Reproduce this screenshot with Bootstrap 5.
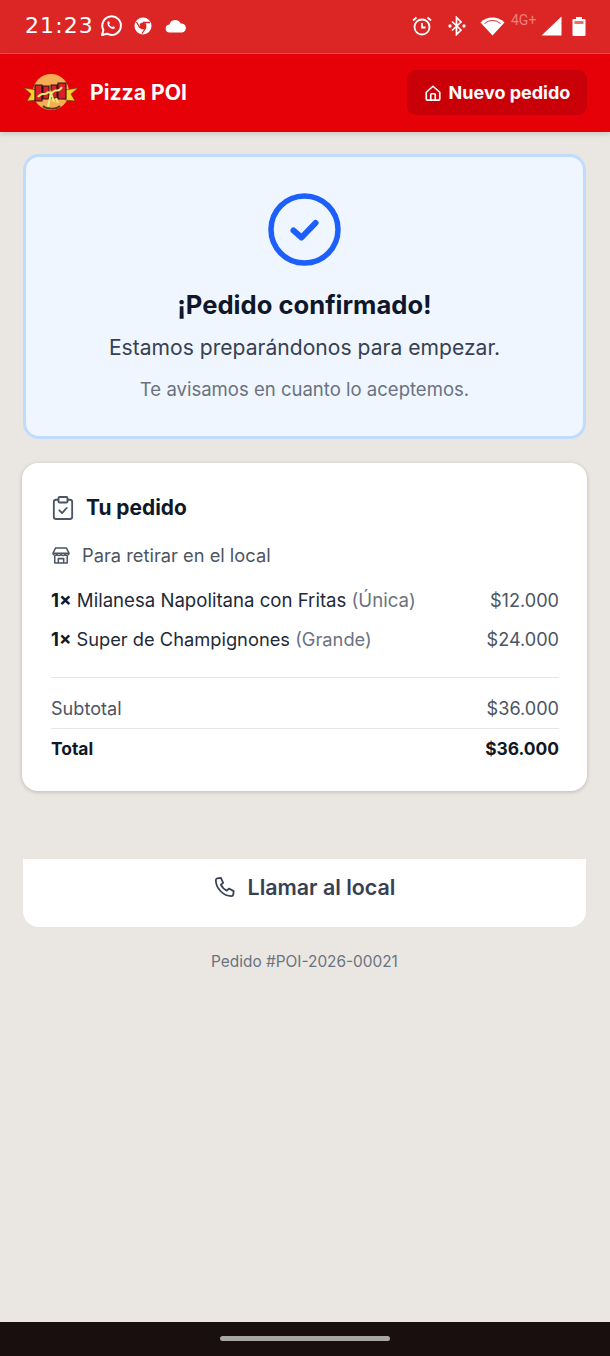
<!DOCTYPE html>
<html lang="es">
<head>
    <meta charset="UTF-8">
    <meta name="viewport" content="width=device-width, initial-scale=1.0">
    <link href="https://cdn.jsdelivr.net/npm/bootstrap@5.3.3/dist/css/bootstrap.min.css" rel="stylesheet">
    <title>Pizza POI</title>
    <style>
        body { background: #eae7e2; font-family: Inter, "Liberation Sans", sans-serif; color: #111827; height: 1356px; overflow: hidden; }
        .page-wrap { height: 1356px; }
        .os-bar { height: 54px; background: #dc2626; border-bottom: 1px solid #e8524f; padding: 0 24px 2px 25px; color: #fff; }
        .os-time { font-family: "DejaVu Sans", sans-serif; font-size: 22px; letter-spacing: 1.1px; width: 74px; }
        .os-net { font-family: Roboto, sans-serif; font-size: 14px; color: #ee7f7c; margin: -10px 2px 0 6px; width: 28px; }
        .gap-wa { margin-left: 11px; }
        .gap-cloud { margin-left: 13px; }
        .gap-bt { margin-left: 15px; }
        .gap-wifi { margin-left: 14px; }
        .gap-batt { margin-left: 10px; }
        .app-head { height: 78px; background: #e60008; padding: 0 23px 0 23px; box-shadow: 0 2px 5px rgba(0,0,0,.15); position: relative; }
        .brand-name { font-size: 21.200px; font-weight: 700; color: #fff; margin-left: 11px; }
        .btn-nuevo { background: #c90007; color: #fff; font-weight: 700; font-size: 18px; height: 45px; width: 180px; margin-top: -1px; border-radius: 9px; padding: 0; border: 0; gap: 7px; }
        .btn-nuevo:hover { background: #c90007; color: #fff; }
        .main-area { padding: 22px 24px 0 23px; }
        .ok-card { height: 285px; background: #eff6ff; border: 3px solid #bfdbfe; border-radius: 16px; padding-top: 36px; }
        .ok-title { font-size: 25.600px; font-weight: 700; color: #0f172a; margin: 21px 0 0; line-height: 36px; }
        .ok-sub { font-size: 21.100px; color: #374151; line-height: 30px; margin: 10px 0 0; }
        .ok-note { font-size: 18.550px; color: #6b7280; line-height: 26px; margin: 13px 0 0; }
        .order-card { margin: 24px -1px 0; height: 328px; background: #fff; border-radius: 16px; box-shadow: 0 1px 4px rgba(0,0,0,.2); padding: 30px 28px 0 29px; }
        .order-title { font-weight: 700; font-size: 20.900px; color: #111827; line-height: 30px; }
        .clip-icon { margin-left: 1px; margin-right: 12px; }
        .pickup-row { font-size: 18.300px; color: #4b5563; margin-top: 19px; line-height: 26px; }
        .store-icon { margin-left: 1px; margin-right: 12px; }
        .item-row { font-size: 18.600px; line-height: 26px; color: #1f2937; margin-top: 19px; }
        .item-row.is-second { font-size: 18.300px; margin-top: 13px; }
        .item-row b { color: #111827; }
        .item-opt { color: #6b7280; }
        .item-price { color: #4b5563; font-size: 18.100px; }
        .total-row { font-size: 18.100px; line-height: 26px; color: #4b5563; }
        .total-row.is-strong { color: #111827; font-weight: 700; font-size: 17.400px; border-top: 1px solid #e5e7eb; padding-top: 7px; margin-top: 7px; }
        .sep-line { border-top: 1px solid #e5e7eb; margin: 25px 0 17px; }
        .call-btn { margin-top: 68px; height: 68px; padding-bottom: 12px; background: #fff; border-radius: 0 0 16px 16px; color: #374151; font-weight: 600; font-size: 21.400px; gap: 12px; }
        .order-num { font-size: 15.400px; color: #6b7280; margin-top: 23px; line-height: 24px; }
        .nav-strip { height: 34px; background: #1a0f0f; }
        .home-pill { width: 170px; height: 5px; background: #a9a6a6; border-radius: 3px; margin-top: 14px; }
    </style>
</head>
<body>
<div class="page-wrap d-flex flex-column">
    <div class="os-bar d-flex align-items-center">
        <span class="os-time">21:23</span>
        <svg width="24" height="24" viewBox="0 0 24 24" fill="none" stroke="#fff" stroke-width="2"><path d="M3 21l1.400-5A9.300 9.300 0 1 1 8 19.700z" stroke-linejoin="round"/><path d="M8.500 8c.6-1.200 1.500-1 1.800-.3l.6 1.500-.8 1c.6 1.300 1.500 2.200 3 2.900l1-.9 1.600.8c.5 1-.3 2-1.500 2-3.500-.2-6.300-3.600-5.700-7z" fill="#fff" stroke="none"/></svg>
        <svg width="18" height="18" viewBox="0 0 18 18" class="gap-wa"><circle cx="9" cy="9" r="8.500" fill="#fff"/><circle cx="9" cy="9" r="3.400" fill="#dc2626"/><path d="M9 5.500h7M6 11l-3.500-6M11.800 11 8 16.500" stroke="#dc2626" stroke-width="1.300"/></svg>
        <svg width="22" height="14" viewBox="0 0 22 14" class="gap-cloud"><path d="M5 13.500a4 4 0 0 1-.6-8A6 6 0 0 1 15.700 4.500 4.500 4.500 0 0 1 17 13.500z" fill="#fff"/></svg>
        <div class="ms-auto d-flex align-items-center">
            <svg width="22" height="22" viewBox="0 0 22 22" fill="none" stroke="#fff" stroke-width="1.800"><circle cx="11" cy="12" r="7.500"/><path d="M11 8v4.500h3.500M2 5.500 5.500 2.500M20 5.500l-3.500-3"/></svg>
            <svg width="18" height="20" viewBox="0 0 18 20" class="gap-bt" fill="none" stroke="#fff" stroke-width="1.700"><path d="M4 5.500 13 14l-4.500 4.500v-17L13 6l-9 8.500"/><circle cx="2" cy="10" r=".8" fill="#fff"/><circle cx="16" cy="10" r=".8" fill="#fff"/></svg>
            <svg width="25" height="20" viewBox="0 0 25 20" class="gap-wifi"><path d="M.5 6.500a17 17 0 0 1 24 0L12.500 19.500z" fill="#fff"/><path d="M4.500 7.500a12 12 0 0 1 16 0" fill="none" stroke="#dc2626" stroke-width="1"/></svg>
            <span class="os-net">4G+</span>
            <svg width="21" height="20" viewBox="0 0 21 20"><path d="M.5 19.500 20.500.5v19z" fill="#fff"/></svg>
            <svg width="14" height="20" viewBox="0 0 14 20" class="gap-batt"><path d="M4 1h6v2h2.500a1 1 0 0 1 1 1v15a1 1 0 0 1-1 1H1.500a1 1 0 0 1-1-1V4a1 1 0 0 1 1-1H4z" fill="#fff"/><rect x="2.500" y="5" width="9" height="3" fill="#e8716e"/></svg>
        </div>
    </div>

    <header class="app-head d-flex align-items-center justify-content-between">
        <div class="d-flex align-items-center">
            <svg width="56" height="40" viewBox="0 0 56 40">
                <circle cx="28" cy="19" r="18" fill="#f6ad55"/>
                <path d="M1 15 14 17 14 27 4 28 8 21z" fill="#f7d02c" stroke="#6b3a10" stroke-width=".6"/>
                <path d="M55 15 42 17 42 27 52 28 48 21z" fill="#f7d02c" stroke="#6b3a10" stroke-width=".6"/>
                <path d="M12 12h7v16h-7zM20 13h6v13h-6zM28 12h6v13h-6zM35 10h8v16h-8z" fill="#d91f2a" stroke="#2a1510" stroke-width="1.100"/>
                <path d="M15 24c4-6 6-1 9-4s3 3 6-1 5 2 9-5M25 34l3-14 3 9M33 25l2 5" fill="none" stroke="#e7ec73" stroke-width="2"/>
                <path d="M20 33c3 3 13 4 17 0" fill="none" stroke="#5b3a1e" stroke-width="2"/>
            </svg>
            <span class="brand-name">Pizza POI</span>
        </div>
        <a href="#" class="btn btn-nuevo d-flex align-items-center justify-content-center">
            <svg width="18" height="18" viewBox="0 0 24 24" fill="none" stroke="#fff" stroke-width="2.200" stroke-linejoin="round"><path d="M3 11 12 3l9 8v9a1.500 1.500 0 0 1-1.500 1.500h-15A1.500 1.500 0 0 1 3 20z"/><path d="M9 21.500V14a1 1 0 0 1 1-1h4a1 1 0 0 1 1 1v7.500"/></svg>
            Nuevo pedido
        </a>
    </header>

    <main class="main-area">
        <section class="ok-card text-center">
            <svg width="73" height="73" viewBox="0 0 73 73" fill="none" stroke="#1d5ffb" class="d-block mx-auto"><circle cx="36.500" cy="36.500" r="33.500" stroke-width="5.500"/><path d="M25.500 37.500 33.500 44.500 47.500 30" stroke-width="6" stroke-linecap="round" stroke-linejoin="round"/></svg>
            <h1 class="ok-title">¡Pedido confirmado!</h1>
            <p class="ok-sub">Estamos preparándonos para empezar.</p>
            <p class="ok-note">Te avisamos en cuanto lo aceptemos.</p>
        </section>

        <section class="order-card">
            <div class="order-title d-flex align-items-center">
                <svg width="22" height="24" viewBox="0 0 24 26" fill="none" stroke="#4b5563" stroke-width="2" stroke-linecap="round" stroke-linejoin="round" class="clip-icon"><path d="M7 4H4.500A2.500 2.500 0 0 0 2 6.500v16A2.500 2.500 0 0 0 4.500 25h15a2.500 2.500 0 0 0 2.500-2.500v-16A2.500 2.500 0 0 0 19.500 4H17"/><rect x="7" y="1" width="10" height="6" rx="1.500"/><path d="M8 15.500l3 3 5-5.500"/></svg>
                <span>Tu pedido</span>
            </div>
            <div class="pickup-row d-flex align-items-center">
                <svg width="18" height="17" viewBox="0 0 20 19" fill="none" stroke="#4b5563" stroke-width="1.700" stroke-linejoin="round" class="store-icon"><path d="M4 1h12l3 6a2.700 2.700 0 0 1-4.500 1.500 3 3 0 0 1-4.500 0 3 3 0 0 1-4.500 0A2.700 2.700 0 0 1 1 7z"/><path d="M3 10v8h14v-8M7 18v-5h6v5M1 7h18"/></svg>
                <span>Para retirar en el local</span>
            </div>
            <div class="item-row d-flex justify-content-between">
                <span><b>1×</b> Milanesa Napolitana con Fritas <span class="item-opt">(Única)</span></span>
                <span class="item-price">$12.000</span>
            </div>
            <div class="item-row is-second d-flex justify-content-between">
                <span><b>1×</b> Super de Champignones <span class="item-opt">(Grande)</span></span>
                <span class="item-price">$24.000</span>
            </div>
            <div class="sep-line"></div>
            <div class="total-row d-flex justify-content-between"><span>Subtotal</span><span>$36.000</span></div>
            <div class="total-row is-strong d-flex justify-content-between"><span>Total</span><span>$36.000</span></div>
        </section>

        <a class="call-btn d-flex align-items-center justify-content-center text-decoration-none" href="#">
            <svg width="22" height="22" viewBox="0 0 24 24" fill="none" stroke="#374151" stroke-width="1.900" stroke-linejoin="round"><path d="M3.500 2.500 7.500 2l2.500 5.500-2.500 2c1.300 3 3.500 5.200 6.500 6.500l2.300-2.300 5.200 2.800-.5 4c-.2 1-1 1.500-2 1.500C10.500 22 2 13.500 2 4.500c0-1 .5-1.800 1.500-2z"/></svg>
            Llamar al local
        </a>
        <div class="order-num text-center">Pedido #POI-2026-00021</div>
    </main>

    <div class="nav-strip mt-auto d-flex justify-content-center">
        <div class="home-pill"></div>
    </div>
</div>
<script src="https://cdn.jsdelivr.net/npm/bootstrap@5.3.3/dist/js/bootstrap.bundle.min.js"></script>
</body>
</html>
